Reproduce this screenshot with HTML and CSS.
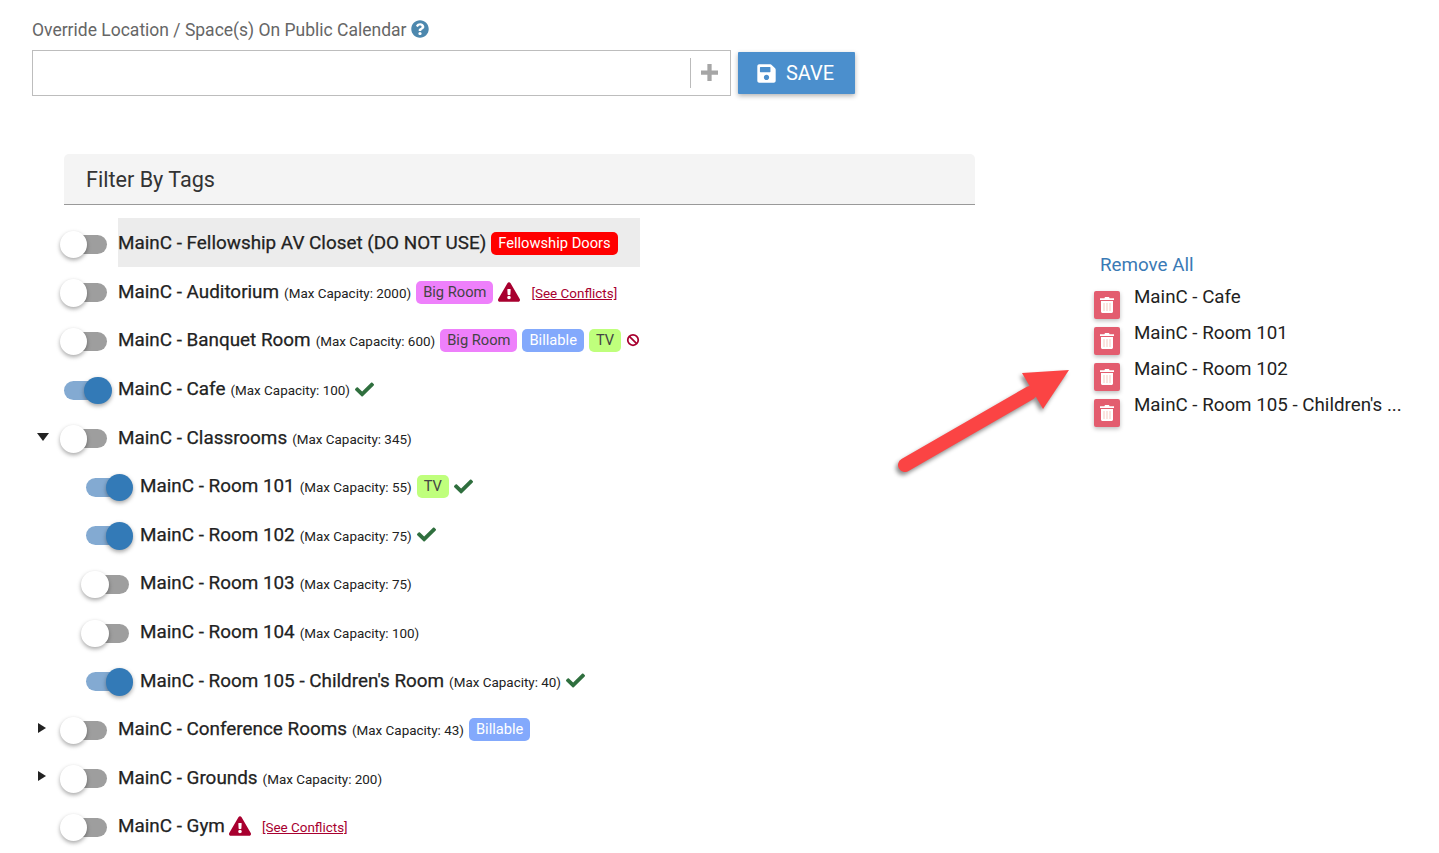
FILE: index.html
```html
<!DOCTYPE html>
<html lang="en">
<head>
<meta charset="utf-8">
<title>Override Location</title>
<link rel="stylesheet" href="styles.css">
</head>
<body>
<svg class="sprite" xmlns="http://www.w3.org/2000/svg" aria-hidden="true">
  <symbol id="i-q" viewBox="0 0 512 512"><path d="M504 256c0 136.997-111.043 248-248 248S8 392.997 8 256C8 119.083 119.043 8 256 8s248 111.083 248 248zM262.655 90c-54.497 0-89.255 22.957-116.549 63.758-3.536 5.286-2.353 12.415 2.715 16.258l34.699 26.31c5.205 3.947 12.621 3.008 16.665-2.122 17.864-22.658 30.113-35.797 57.303-35.797 20.429 0 45.698 13.148 45.698 32.958 0 14.976-12.363 22.667-32.534 33.976C247.128 238.528 216 254.941 216 296v4c0 6.627 5.373 12 12 12h56c6.627 0 12-5.373 12-12v-1.333c0-28.462 83.186-29.647 83.186-106.667 0-58.002-60.165-102-116.531-102zM256 338c-25.365 0-46 20.635-46 46 0 25.364 20.635 46 46 46s46-20.636 46-46c0-25.365-20.635-46-46-46z"/></symbol>
  <symbol id="i-save" viewBox="0 0 448 512"><path d="M433.941 129.941l-83.882-83.882A48 48 0 0 0 316.118 32H48C21.49 32 0 53.49 0 80v352c0 26.51 21.49 48 48 48h352c26.51 0 48-21.49 48-48V163.882a48 48 0 0 0-14.059-33.941zM224 416c-35.346 0-64-28.654-64-64 0-35.346 28.654-64 64-64s64 28.654 64 64c0 35.346-28.654 64-64 64zm96-304.52V212c0 6.627-5.373 12-12 12H76c-6.627 0-12-5.373-12-12V108c0-6.627 5.373-12 12-12h228.52c3.183 0 6.235 1.264 8.485 3.515l3.48 3.48A11.996 11.996 0 0 1 320 111.48z"/></symbol>
  <symbol id="i-check" viewBox="0 0 512 512"><path d="M173.898 439.404l-166.4-166.4c-9.997-9.997-9.997-26.206 0-36.204l36.203-36.204c9.997-9.998 26.207-9.998 36.204 0L192 312.69 432.095 72.596c9.997-9.997 26.207-9.997 36.204 0l36.203 36.204c9.997 9.997 9.997 26.206 0 36.204l-294.4 294.401c-9.998 9.997-26.207 9.997-36.204-.001z"/></symbol>
  <symbol id="i-warn" viewBox="0 0 576 512"><path d="M569.517 440.013C587.975 472.007 564.806 512 527.94 512H48.054c-36.937 0-59.999-40.055-41.577-71.987L246.423 23.985c18.467-32.009 64.72-31.951 83.154 0l239.94 416.028zM288 354c-25.405 0-46 20.595-46 46s20.595 46 46 46 46-20.595 46-46-20.595-46-46-46zm-43.673-165.346l7.418 136c.347 6.364 5.609 11.346 11.982 11.346h48.546c6.373 0 11.635-4.982 11.982-11.346l7.418-136c.375-6.874-5.098-12.654-11.982-12.654h-63.383c-6.884 0-12.356 5.78-11.981 12.654z"/></symbol>
  <symbol id="i-ban" viewBox="0 0 16 16"><circle cx="8" cy="8" r="6" fill="none" stroke="currentColor" stroke-width="2"/><path d="M3.8 3.8l8.4 8.4" fill="none" stroke="currentColor" stroke-width="2"/></symbol>
  <symbol id="i-trash" viewBox="0 0 14 16"><path d="M5 0h4l.6 1.200H14v1.800H0V1.200h4.400zM1 4h12v10.500c0 .8-.7 1.500-1.500 1.500h-9C1.700 16 1 15.300 1 14.500z"/><path fill="#f7c9c0" d="M3.500 6h1v8h-1zM6.500 6h1v8h-1zM9.500 6h1v8h-1z"/></symbol>
</svg>

<main class="page">
  <section class="left">
    <div class="field-label">Override Location / Space(s) On Public Calendar <svg class="q-icon"><use href="#i-q"/></svg></div>
    <div class="field-row">
      <div class="picker">
        <span class="picker-sep"></span>
        <span class="picker-add">
          <svg class="plus" viewBox="0 0 16 16"><path d="M6 0h4v6h6v4h-6v6H6v-6H0V6h6z"/></svg>
        </span>
      </div>
      <button class="save" type="button"><svg class="save-icon"><use href="#i-save"/></svg>SAVE</button>
    </div>

    <h2 class="filter">Filter By Tags</h2>

    <ul class="rows">
      <li class="row">
        <span class="caret-cell"></span>
        <span class="toggle"><span class="knob"></span></span>
        <span class="label hl"><span class="name">MainC - Fellowship AV Closet (DO NOT USE)</span><span class="tag red">Fellowship Doors</span></span>
      </li>
      <li class="row">
        <span class="caret-cell"></span>
        <span class="toggle"><span class="knob"></span></span>
        <span class="label"><span class="name">MainC - Auditorium</span><span class="cap">(Max Capacity: 2000)</span><span class="tag pink">Big Room</span><svg class="warn"><use href="#i-warn"/></svg><a class="conf" href="#">[See Conflicts]</a></span>
      </li>
      <li class="row">
        <span class="caret-cell"></span>
        <span class="toggle"><span class="knob"></span></span>
        <span class="label"><span class="name">MainC - Banquet Room</span><span class="cap">(Max Capacity: 600)</span><span class="tag pink">Big Room</span><span class="tag blue">Billable</span><span class="tag green">TV</span><svg class="ban"><use href="#i-ban"/></svg></span>
      </li>
      <li class="row">
        <span class="caret-cell"></span>
        <span class="toggle on"><span class="knob"></span></span>
        <span class="label"><span class="name">MainC - Cafe</span><span class="cap">(Max Capacity: 100)</span><svg class="check"><use href="#i-check"/></svg></span>
      </li>
      <li class="row">
        <span class="caret-cell"><span class="caret down"></span></span>
        <span class="toggle"><span class="knob"></span></span>
        <span class="label"><span class="name">MainC - Classrooms</span><span class="cap">(Max Capacity: 345)</span></span>
      </li>
      <li class="row child">
        <span class="caret-cell"></span>
        <span class="toggle on"><span class="knob"></span></span>
        <span class="label"><span class="name">MainC - Room 101</span><span class="cap">(Max Capacity: 55)</span><span class="tag green">TV</span><svg class="check"><use href="#i-check"/></svg></span>
      </li>
      <li class="row child">
        <span class="caret-cell"></span>
        <span class="toggle on"><span class="knob"></span></span>
        <span class="label"><span class="name">MainC - Room 102</span><span class="cap">(Max Capacity: 75)</span><svg class="check"><use href="#i-check"/></svg></span>
      </li>
      <li class="row child">
        <span class="caret-cell"></span>
        <span class="toggle"><span class="knob"></span></span>
        <span class="label"><span class="name">MainC - Room 103</span><span class="cap">(Max Capacity: 75)</span></span>
      </li>
      <li class="row child">
        <span class="caret-cell"></span>
        <span class="toggle"><span class="knob"></span></span>
        <span class="label"><span class="name">MainC - Room 104</span><span class="cap">(Max Capacity: 100)</span></span>
      </li>
      <li class="row child">
        <span class="caret-cell"></span>
        <span class="toggle on"><span class="knob"></span></span>
        <span class="label"><span class="name">MainC - Room 105 - Children's Room</span><span class="cap">(Max Capacity: 40)</span><svg class="check"><use href="#i-check"/></svg></span>
      </li>
      <li class="row">
        <span class="caret-cell"><span class="caret right"></span></span>
        <span class="toggle"><span class="knob"></span></span>
        <span class="label"><span class="name">MainC - Conference Rooms</span><span class="cap">(Max Capacity: 43)</span><span class="tag blue">Billable</span></span>
      </li>
      <li class="row">
        <span class="caret-cell"><span class="caret right"></span></span>
        <span class="toggle"><span class="knob"></span></span>
        <span class="label"><span class="name">MainC - Grounds</span><span class="cap">(Max Capacity: 200)</span></span>
      </li>
      <li class="row">
        <span class="caret-cell"></span>
        <span class="toggle"><span class="knob"></span></span>
        <span class="label"><span class="name">MainC - Gym</span><svg class="warn gym"><use href="#i-warn"/></svg><a class="conf" href="#">[See Conflicts]</a></span>
      </li>
    </ul>
  </section>

  <aside class="selected">
    <a class="remove-all" href="#">Remove All</a>
    <ul class="sel-list">
      <li class="sel-item"><span class="trash"><svg class="trash-icon"><use href="#i-trash"/></svg></span><span class="sel-name">MainC - Cafe</span></li>
      <li class="sel-item"><span class="trash"><svg class="trash-icon"><use href="#i-trash"/></svg></span><span class="sel-name">MainC - Room 101</span></li>
      <li class="sel-item"><span class="trash"><svg class="trash-icon"><use href="#i-trash"/></svg></span><span class="sel-name">MainC - Room 102</span></li>
      <li class="sel-item"><span class="trash"><svg class="trash-icon"><use href="#i-trash"/></svg></span><span class="sel-name">MainC - Room 105 - Children's ...</span></li>
    </ul>
  </aside>
</main>

<svg class="arrow" viewBox="0 0 190 125" xmlns="http://www.w3.org/2000/svg" aria-hidden="true">
  <path d="M15 105 L140 33" fill="none" stroke="#fb4444" stroke-width="14" stroke-linecap="round"/>
  <path d="M179 10 L132 13 L153 49 Z" fill="#fb4444"/>
</svg>
```

FILE: styles.css
```css
* { box-sizing: border-box; }
html, body { margin: 0; padding: 0; }
body {
  height: 853px;
  overflow: hidden;
  background: #fff;
  color: #222;
  font-family: Roboto, "Liberation Sans", sans-serif;
  position: relative;
}
.sprite { position: absolute; width: 0; height: 0; }
ul { list-style: none; margin: 0; padding: 0; }

.page { display: flex; align-items: flex-start; padding-left: 32px; }
.left { width: 943px; flex: none; padding-top: 20px; }

.field-label { font-size: 17.5px; line-height: 21px; color: #666; white-space: nowrap; }
.q-icon { width: 18px; height: 18px; fill: #4d88ae; vertical-align: -2px; }

.field-row { display: flex; align-items: center; gap: 7px; margin-top: 9px; }
.picker {
  width: 699px; height: 46px;
  border: 1px solid #bdbdbd;
  display: flex; align-items: center; justify-content: flex-end;
}
.picker-sep { width: 1px; height: 30px; background: #bbb; }
.picker-add { width: 39px; display: flex; align-items: center; justify-content: center; padding: 0 2px 2px 0; }
.plus { width: 17px; height: 17px; fill: #a6a6a6; }
.save {
  width: 117px; height: 42px;
  border: 0; border-radius: 1px;
  background: #4b8fcd; color: #fff;
  font: 400 20px Roboto, sans-serif;
  display: flex; align-items: center; justify-content: center; gap: 10px;
  box-shadow: 0 2px 5px rgba(0,0,0,.3);
  padding: 0 2px 0 0;
}
.save-icon { width: 19px; height: 21px; fill: #fff; }

.filter {
  margin: 58px 0 0 32px;
  width: 911px; height: 51px;
  background: #f4f4f4;
  border-bottom: 1px solid #999;
  border-radius: 5px 5px 0 0;
  padding: 1px 0 0 22px;
  font-size: 21.6px; font-weight: 400; line-height: 50px;
  color: #333;
}
.rows { margin-top: 14px; }
.row { display: flex; align-items: center; height: 48.6px; }
.caret-cell { width: 32px; flex: none; padding-left: 5px; display: flex; }
.caret { width: 0; height: 0; display: block; }
.caret.down { border-left: 6px solid transparent; border-right: 6px solid transparent; border-top: 8px solid #222; margin-top: -2px; }
.caret.right { border-top: 5px solid transparent; border-bottom: 5px solid transparent; border-left: 8px solid #222; margin-left: 1px; margin-top: -3px; }

.toggle {
  position: relative; flex: none;
  width: 43px; height: 19px; margin: 2px 11px 0 0;
  border-radius: 10px; background: #9e9e9e;
}
.knob {
  position: absolute; left: -4.5px; top: -4px;
  width: 27.5px; height: 27.5px; border-radius: 50%;
  background: #fff;
  box-shadow: 0 2px 4px rgba(0,0,0,.35);
}
.toggle.on { background: #83aad2; }
.toggle.on .knob { left: 20px; background: #337ab7; }
.child .toggle { margin-left: 21.5px; margin-right: 11.5px; }

.label { display: flex; align-items: center; white-space: nowrap; }
.label.hl { width: 522px; height: 49px; background: #ececec; margin-bottom: 2px; padding-top: 2px; }
.name { font-size: 18.87px; line-height: 24px; color: #222; -webkit-text-stroke: .25px #222; }
.cap { font-size: 13.45px; margin-left: 5px; padding-top: 3px; color: #222; }
.tag {
  display: inline-block; height: 23px; line-height: 23px;
  padding: 0 7px; border-radius: 5px;
  font-size: 14.7px; margin: 1px 0 0 5px;
}
.red { background: #ff0000; color: #fff; }
.pink { background: #ee80fb; color: #444; }
.blue { background: #83a9fc; color: #fff; }
.green { background: #bfff7c; color: #444; }

.warn { width: 22px; height: 20px; fill: #a8002f; margin-left: 5px; }
.warn.gym { margin-left: 4px; }
.conf { font-size: 13.45px; color: #a8002f; margin-left: 11px; padding-top: 3px; }
.ban { width: 14px; height: 14px; color: #a8002f; margin-left: 5px; }
.check { width: 19px; height: 19px; fill: #2f6f3e; margin-left: 5px; }

.selected { margin: 255px 0 0 119px; flex: none; }
.remove-all { display: block; margin-left: 6px; font-size: 18.8px; line-height: 21px; color: #3a7ab5; text-decoration: none; }
.sel-list { margin-top: 11px; }
.sel-item { display: flex; align-items: flex-start; height: 36px; }
.trash {
  width: 26px; height: 28px; flex: none;
  margin-top: 4px;
  background: #e35d6f; border-radius: 2px;
  box-shadow: 0 2px 4px rgba(0,0,0,.25);
  display: flex; align-items: center; justify-content: center;
}
.trash-icon { width: 14px; height: 16px; fill: #fff; }
.sel-name { margin-left: 14px; font-size: 18.75px; line-height: 21px; color: #222; white-space: nowrap; }

.arrow {
  position: absolute; left: 890px; top: 360px;
  width: 190px; height: 125px;
  filter: drop-shadow(-2px 3px 2px rgba(0,0,0,.45));
}
```
